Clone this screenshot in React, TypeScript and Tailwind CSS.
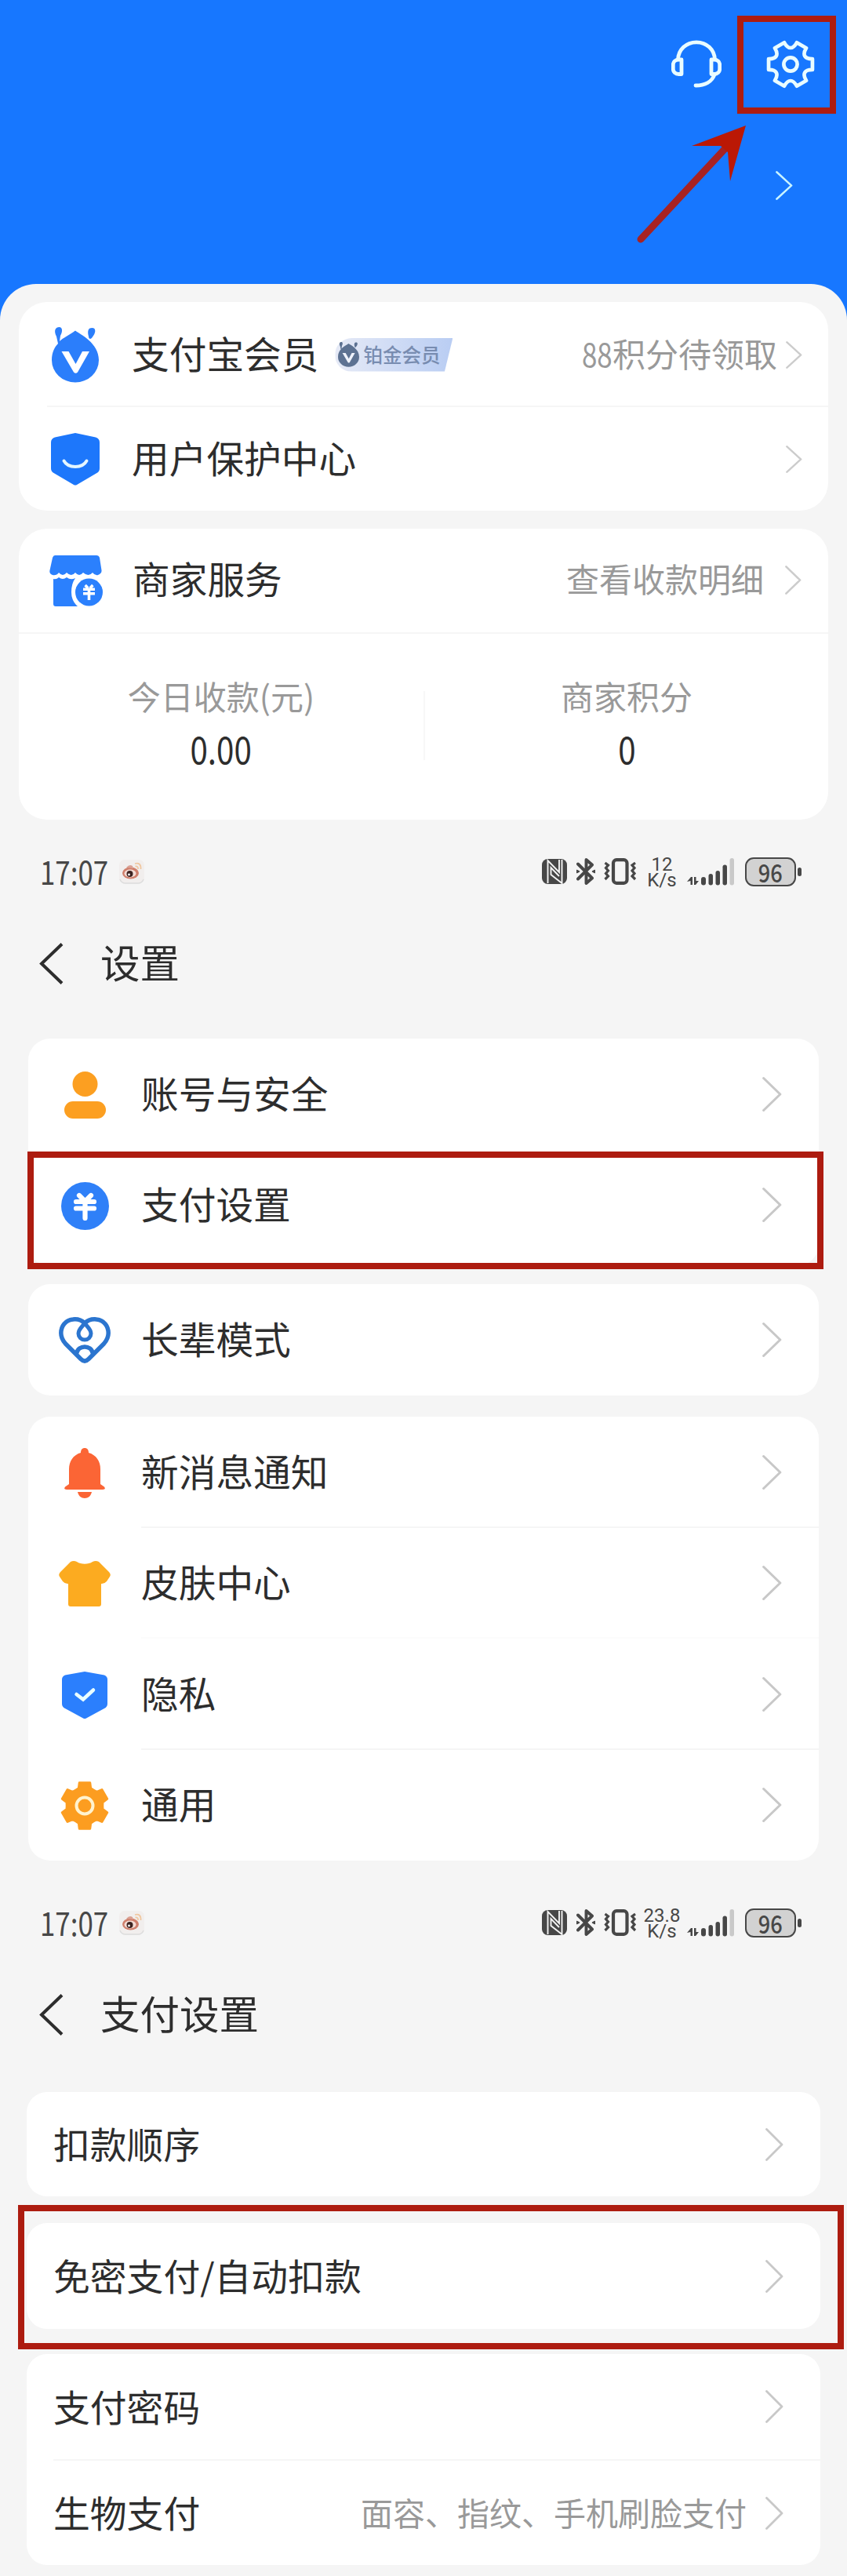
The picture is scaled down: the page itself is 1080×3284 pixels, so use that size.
import React from 'react';

interface ChevronProps {
  className?: string;
}

const Chevron: React.FC<ChevronProps> = ({ className = 'w-[23px] h-[42px] text-[#c8c8c8]' }) => (
  <svg className={className} viewBox="0 0 23 42" fill="none" stroke="currentColor" strokeWidth="2.8" preserveAspectRatio="none">
    <path d="M1.5 1.5 21 21 1.5 40.5" strokeLinecap="round" strokeLinejoin="round" />
  </svg>
);

// Six-tooth gear outline centred on 0,0
const gearPath = (outer: number, inner: number, tip: number, root: number, start: number, round: boolean) => {
  const at = (r: number, deg: number) => {
    const a = (deg * Math.PI) / 180;
    return `${(r * Math.cos(a)).toFixed(2)} ${(r * Math.sin(a)).toFixed(2)}`;
  };
  let d = '';
  for (let i = 0; i < 6; i++) {
    const a = start + i * 60;
    d += `${i === 0 ? 'M' : 'L'}${at(outer, a - tip)}L${at(outer, a + tip)}`;
    d += round
      ? `C${at(inner, a + root)} ${at(inner, a + 60 - root)} ${at(outer, a + 60 - tip)}`
      : `L${at(inner, a + root)}Q${at(inner - 1, a + 30)} ${at(inner, a + 60 - root)}`;
  }
  return d + 'Z';
};

const HeadsetIcon = () => (
  <svg className="w-16 h-[62px]" viewBox="0 0 64 62" fill="none" stroke="#e9fcff" strokeWidth="4.8" strokeLinejoin="round">
    <path d="M8.5 25C9 12 19 2.8 32 2.8S55 12 55.500 25" />
    <path d="M13 25v18.500H9.500C5 43.500 2.300 40.500 2.300 37v-5.500C2.300 28 5 25 9.500 25ZM51 25v18.500h3.500c4.500 0 7.200-3 7.200-6.500v-5.500c0-3.500-2.700-6.500-7.200-6.500Z" />
    <path d="M55 44C52 53 43 58 31 58" strokeLinecap="round" />
  </svg>
);

const GearOutlineIcon = () => (
  <svg className="w-[62px] h-[62px]" viewBox="-31 -31 62 62" fill="none" stroke="#e9fcff" strokeWidth="4.7" strokeLinejoin="round">
    <path d={gearPath(28.8, 19, 14, 21, 0, true)} />
    <circle r="8.600" />
  </svg>
);

const AntMark = ({ color, letter }: { color: string; letter: string }) => (
  <>
    <path d="M6 12C2 4 5 0 9.500 0S14 6 11 11L10 18C14 14 24 9 30 4.500 36 9 60 20 60 42a30 28.500 0 0 1-60 0C0 32 4 25 8 21Z" fill={color} />
    <path d="M47 12C45 4 47 1 51.500 1S56.500 6 53 11c-2 3-3 4-4 4S47 14 47 12Z" fill={color} />
    <path d="M12.500 31h9L30.500 47 39 31h9L33 57.500q-2.500 2.500-5 0Z" fill={letter} />
  </>
);

const MemberIcon = () => (
  <svg className="w-[60px] h-[71px]" viewBox="0 0 60 71">
    <AntMark color="#2b7efb" letter="#ffffff" />
  </svg>
);

const ProtectIcon = () => (
  <svg className="w-[62px] h-[67px]" viewBox="0 0 62 67">
    <path d="M31 0 57 5.500Q62 7 62 12V45Q62 49 58.500 51L33 66Q31 67 29 66L3.500 51Q0 49 0 45V12Q0 7 5 5.500Z" fill="#1d77fb" />
    <path d="M16.500 35.500C22 45.500 40 45.500 45.500 35.500" fill="none" stroke="#e4f6ff" strokeWidth="4" strokeLinecap="round" />
  </svg>
);

const yuanMark = 'M-7.500-14.500-2-9M7.500-14.500 2-9M-11.500-6.500H11.500M-11.500 2H11.500M0-8V14.500';

const StoreIcon = () => (
  <svg className="w-[68px] h-[65px]" viewBox="0 0 68 65">
    <path d="M7 0H60Q63 0 64 3L66.500 19Q67 23 62 25 58 26 55 22 50 28 43 22 38 28 33 22 28 28 22 22 17 28 12 22 9 26 4 25-.500 23 .500 19L4 3Q5 0 7 0Z" fill="#2b80fd" />
    <path d="M5 30Q9 31 12 28 17 32 22 28 27 32 33 29 28 36 28 47 28 58 36 65H8Q5 65 5 62Z" fill="#2b80fd" />
    <circle cx="50.500" cy="47" r="17.500" fill="#2b80fd" />
    <path d={yuanMark} transform="translate(50.500 47.500) scale(.65)" stroke="#ffffff" strokeWidth="5.500" fill="none" />
  </svg>
);

const PersonIcon = () => (
  <svg className="w-[53px] h-[60px]" viewBox="0 0 53 60" fill="#fc9f21">
    <circle cx="26.500" cy="16" r="16" />
    <rect y="38" width="53" height="22" rx="11" />
  </svg>
);

const YuanIcon = () => (
  <svg className="w-[61px] h-[61px]" viewBox="-30.500 -30.500 61 61">
    <circle r="30.500" fill="#2f80f8" />
    <path d={yuanMark} transform="translate(0 1)" stroke="#ffffff" strokeWidth="6.200" fill="none" strokeLinecap="round" />
  </svg>
);

const HeartIcon = () => (
  <svg className="w-[66px] h-[59px]" viewBox="0 0 66 59" fill="none" stroke="#2b75cf" strokeWidth="5.500" strokeLinejoin="round">
    <path d="M33 8C28 3 22 2.500 18 3 8 4 2.800 12 2.800 20.500 2.800 26 5 30 8.500 34L28 53.500Q33 58.500 38 53.500L57.500 34C61 30 63.200 26 63.200 20.500 63.200 12 58 4 48 3 44 2.500 38 3 33 8Z" />
    <path d="M33 8C29 13 25 16 25 21a8 8 0 0 0 16 0C41 16 37 13 33 8Z" strokeWidth="5" />
    <path d="M22.500 46.500C25 35 41 35 43.500 46.500" />
  </svg>
);

const BellIcon = () => (
  <svg className="w-[52px] h-[64px]" viewBox="0 0 52 64" fill="#fb6535">
    <path d="M21 6C21 2 23 0 26 0s5 2 5 6C41 9 46 17 46 27V46L51 49.500Q53.500 53 49 53H3Q-1.500 53 1 49.500L6 46V27C6 17 11 9 21 6Z" />
    <path d="M17 56H35C34 61 30.500 64 26 64S18 61 17 56Z" />
  </svg>
);

const ShirtIcon = () => (
  <svg className="w-[66px] h-[58px]" viewBox="0 0 66 58" fill="#fcab20">
    <path d="M15 1Q19-1 23 1C28 4.500 38 4.500 43 1Q47-1 51 1L64 14Q67 17.500 65 20L61 26Q58 29.500 54 29V55Q54 58 51 58H15Q12 58 12 55V29Q8 29.500 5 26L1 20Q-1 17.500 2 14Z" />
  </svg>
);

const PrivacyIcon = () => (
  <svg className="w-[58px] h-[60px]" viewBox="0 0 58 60">
    <path d="M29 0 54 4.500Q58 6 58 10V41Q58 45 54 47L31 59.500Q29 60.500 27 59.500L4 47Q0 45 0 41V10Q0 6 4 4.500Z" fill="#2b7ffd" />
    <path d="M18.500 29 27 35.500 40 23.500" fill="none" stroke="#eaffff" strokeWidth="4.500" strokeLinecap="round" />
  </svg>
);

const GearIcon = () => (
  <svg className="w-[62px] h-[64px]" viewBox="-31 -32 62 64">
    <path d={gearPath(30, 23.5, 13, 19, 30, false)} fill="#fc9d20" stroke="#fc9d20" strokeWidth="3" strokeLinejoin="round" />
    <circle r="10.500" fill="none" stroke="#fff3cf" strokeWidth="4" />
  </svg>
);

const WeiboIcon = () => (
  <svg className="w-8 h-8" viewBox="0 0 32 32">
    <rect y="1" width="32" height="30" rx="7" fill="#f1eeed" />
    <path d="M1 26Q3 31 8 31H24Q29 31 31 26" stroke="#dcdcdc" strokeWidth="1.500" fill="none" />
    <ellipse cx="14.500" cy="18" rx="10.500" ry="7.500" fill="#cf7f6c" />
    <path d="M9 11Q13 6 17 9L18 12Z" fill="#dba092" />
    <ellipse cx="14" cy="18.500" rx="7.500" ry="5" fill="#f4dcd5" />
    <circle cx="13.500" cy="19" r="4" fill="#3c2220" />
    <circle cx="12.500" cy="20" r="1.400" fill="#ffffff" />
    <path d="M20 6Q28 4 27.500 13M20.500 9.500Q24.500 9 24 13" stroke="#f0c7a0" strokeWidth="1.800" fill="none" />
  </svg>
);

const NfcIcon = () => (
  <svg className="w-8 h-8" viewBox="0 0 32 32">
    <rect width="32" height="32" rx="7.500" fill="#474747" />
    <path d="M7.500 31V2L22 17V1M25.500 1V31L11.500 20V11L22 22" fill="none" stroke="#f5f5f5" strokeWidth="1.900" />
  </svg>
);

const BluetoothIcon = () => (
  <svg className="w-6 h-[34px]" viewBox="0 0 24 34" fill="none" stroke="#474747" strokeWidth="3.900" strokeLinejoin="round" strokeLinecap="round">
    <path d="M2 7.500 20 25.500 12.500 32V2L20 8.500 2 26.500" />
    <path d="M.500 15.500v3L3.500 17ZM23.500 15.500v3L20.500 17Z" fill="#474747" strokeWidth="1.500" />
  </svg>
);

const VibrateIcon = () => (
  <svg className="w-[42px] h-[34px]" viewBox="0 0 42 34" fill="none" stroke="#474747">
    <rect x="12" y="2.200" width="17.500" height="29.600" rx="4" strokeWidth="4.200" />
    <path d="M1.500 6 5.500 9 2.500 12.500 5.500 16 2.500 19.500 5.500 23 1.500 27M40 6 36 9 39 12.500 36 16 39 19.500 36 23 40 27" strokeWidth="3.200" />
  </svg>
);

const SignalIcon = () => (
  <svg className="w-[61px] h-[35px]" viewBox="0 0 61 35" fill="#474747">
    <path d="M0 30 5 24H7V34H4.500V29ZM9 24H11.500V29L15 29 11 34H9Z" />
    <rect x="18" y="24" width="6" height="10.500" rx="3" />
    <rect x="27.500" y="20" width="5.500" height="14.500" rx="2.700" />
    <rect x="36.500" y="16" width="5.500" height="18.500" rx="2.700" />
    <rect x="45.500" y="8.500" width="5.500" height="26" rx="2.700" />
    <rect x="54.500" y="0" width="5.500" height="34.500" rx="2.700" fill="#c9c9c9" />
  </svg>
);

const StatusBar = ({ speed }: { speed: string }) => (
  <div className="flex items-center h-[52px] pl-[51px] pr-[58px] text-[#474747]">
    <div className="w-[88px] mr-[13px]">
      <span className="block w-[106px] origin-left scale-x-[.83] text-[42px] leading-[52px] -mt-[2px]">17:07</span>
    </div>
    <WeiboIcon />
    <div className="flex items-center ml-auto">
      <NfcIcon />
      <div className="ml-3"><BluetoothIcon /></div>
      <div className="ml-[11px]"><VibrateIcon /></div>
      <div className="w-[52px] ml-[6px] pt-px font-['Roboto',sans-serif] text-[24px] leading-[20px] text-center">
        {speed}<br />K/s
      </div>
      <div className="ml-[6px]"><SignalIcon /></div>
      <div className="flex items-center justify-center w-[65px] h-[37px] ml-[13px] rounded-[11px] border-[2.500px] border-[#474747] bg-[#d2d2d2]">
        <span className="scale-x-[.85] text-[32px] leading-[30px] font-medium -mt-px">96</span>
      </div>
      <div className="w-[5px] h-[11px] ml-[2px] rounded-full bg-[#474747]" />
    </div>
  </div>
);

const TitleBar = ({ title }: { title: string }) => (
  <div className="flex items-center h-[60px] pl-[50px] text-[#2d2d2d]">
    <svg className="w-[31px] h-[53px]" viewBox="0 0 31 53" fill="none" stroke="currentColor" strokeWidth="4">
      <path d="M29 1.500 3 26.500 29 51.500" />
    </svg>
    <h2 className="ml-[47px] -mt-[6px] text-[50.500px] leading-[60px]">{title}</h2>
  </div>
);

interface SettingRowProps {
  icon: React.ReactNode;
  label: string;
  divider?: string;
}

const SettingRow: React.FC<SettingRowProps> = ({ icon, label, divider = 'border-transparent' }) => (
  <div className="flex items-center h-[141.500px]">
    <div className="flex items-center justify-center w-[144px] pt-[2px]">{icon}</div>
    <div className={`flex items-center justify-between flex-1 h-full pr-[47px] border-b-2 ${divider}`}>
      <span className="text-[47.700px] leading-[60px] -mt-[2px]">{label}</span>
      <Chevron className="w-[25px] h-[44px] text-[#c8c8c8] mt-[2px]" />
    </div>
  </div>
);

const PayRow = ({ label, note, height }: { label: string; note?: string; height: string }) => (
  <div className={`flex items-center pl-[34px] pr-[47px] ${height}`}>
    <span className="text-[46.800px] leading-[60px] -mt-[3px]">{label}</span>
    {note && <span className="ml-auto text-[41px] leading-[60px] text-[#999999] mr-[24px] -mt-[3px]">{note}</span>}
    <div className={note ? '' : 'ml-auto'}>
      <Chevron />
    </div>
  </div>
);

const Highlight = ({ className }: { className: string }) => (
  <div className={`absolute border-[8.500px] border-[#ad1c10] ${className}`} />
);

const Hero = () => (
  <header className="relative h-[362px]">
    <div className="flex justify-end items-center gap-[57px] pt-[51px] pr-[41px]">
      <HeadsetIcon />
      <GearOutlineIcon />
    </div>
    <div className="flex justify-end pt-[105px] pr-[69px]">
      <Chevron className="w-[22px] h-[37px] text-[#c9f4ff]" />
    </div>
    <Highlight className="left-[940px] top-[20px] w-[126px] h-[125px] border-[#a82222]" />
    <svg className="absolute left-[810px] top-[156px] w-[146px] h-[158px]" viewBox="0 0 146 158">
      <path d="M7 149 115 33" stroke="#a82222" strokeWidth="9" strokeLinecap="round" />
      <path d="M141 4 72 30 109 30 118 38 121 75Z" fill="#bb1805" />
    </svg>
  </header>
);

const MemberCard = () => (
  <section className="h-[266px] mx-6 rounded-[36px] bg-white">
    <div className="flex items-center h-[134px] pl-[42px] pr-[33px]">
      <MemberIcon />
      <span className="ml-[42px] -mt-[4px] text-[47.700px] leading-[60px]">支付宝会员</span>
      <div className="flex items-center w-[150px] h-[43px] ml-[21px] pl-1 bg-linear-to-r from-[#e6eaf6] to-[#b9cdf3] rounded-l-full [clip-path:polygon(0_0,100%_0,93%_100%,0_100%)]">
        <svg className="w-[27px] h-[32px]" viewBox="0 0 60 71">
          <AntMark color="#5d7292" letter="#eef2fb" />
        </svg>
        <span className="ml-[5px] text-[24.500px] leading-[30px] font-medium text-[#788cb0]">铂金会员</span>
      </div>
      <span className="flex-1 mr-[11px] -mt-[4px] text-right text-[#999999] text-[42px] leading-[60px]">
        <span className="inline-block origin-right scale-x-[.83]">88</span>积分待领取
      </span>
      <Chevron className="w-[21px] h-[35px] text-[#cccccc]" />
    </div>
    <div className="ml-9 h-[2px] -mt-[2px] bg-[#f6f6f6]" />
    <div className="flex items-center h-[132px] pl-[41px] pr-[33px]">
      <ProtectIcon />
      <span className="ml-[41px] -mt-[4px] text-[47.700px] leading-[60px]">用户保护中心</span>
      <Chevron className="ml-auto w-[21px] h-[35px] text-[#cccccc]" />
    </div>
  </section>
);

const MerchantCard = () => (
  <section className="h-[371px] mt-[23px] mx-6 rounded-[36px] bg-white">
    <div className="flex items-center h-[134px] pl-[39px] pr-[34px] border-b-2 border-[#f6f6f6]">
      <StoreIcon />
      <span className="ml-[38px] text-[47.700px] leading-[60px] -mt-[7px]">商家服务</span>
      <span className="ml-auto mr-[27px] text-[42px] leading-[60px] text-[#999999] -mt-[7px]">查看收款明细</span>
      <Chevron className="w-[21px] h-[37px] text-[#cccccc] -mt-px" />
    </div>
    <div className="flex h-[237px]">
      <div className="flex flex-col items-center w-[516px] pt-[47px]">
        <span className="text-[42px] leading-[64px] text-[#999999]">今日收款(元)</span>
        <span className="text-[48px] leading-[68px] scale-x-[.84]">0.00</span>
      </div>
      <div className="w-[2px] h-[88px] mt-[73px] bg-[#f7f7f7]" />
      <div className="flex flex-col items-center flex-1 pt-[47px]">
        <span className="text-[42px] leading-[64px] text-[#999999]">商家积分</span>
        <span className="text-[48px] leading-[68px] scale-x-[.84]">0</span>
      </div>
    </div>
  </section>
);

const SettingsPage = () => (
  <section>
    <div className="pt-[40px]">
      <StatusBar speed="12" />
    </div>
    <div className="pt-[61px]">
      <TitleBar title="设置" />
    </div>
    <div className="mx-9 mt-[66px]">
      <div className="relative h-[290px] rounded-[28px] bg-white">
        <SettingRow icon={<PersonIcon />} label="账号与安全" />
        <SettingRow icon={<YuanIcon />} label="支付设置" />
        <Highlight className="-left-px top-[144px] w-[1015px] h-[150px]" />
      </div>
      <div className="mt-[23px] rounded-[28px] bg-white">
        <SettingRow icon={<HeartIcon />} label="长辈模式" />
      </div>
      <div className="mt-[27.500px] rounded-[28px] bg-white">
        <SettingRow icon={<BellIcon />} label="新消息通知" divider="border-[#f5f5f5]" />
        <SettingRow icon={<ShirtIcon />} label="皮肤中心" divider="border-[#fcfcfc]" />
        <SettingRow icon={<PrivacyIcon />} label="隐私" divider="border-[#f5f5f5]" />
        <SettingRow icon={<GearIcon />} label="通用" />
      </div>
    </div>
  </section>
);

const PaymentPage = () => (
  <section>
    <div className="pt-[53px]">
      <StatusBar speed="23.8" />
    </div>
    <div className="pt-[61px]">
      <TitleBar title="支付设置" />
    </div>
    <div className="mx-[34px] mt-[69px]">
      <div className="rounded-[26px] bg-white">
        <PayRow label="扣款顺序" height="h-[133px]" />
      </div>
      <div className="relative mt-[34px] rounded-[26px] bg-white">
        <PayRow label="免密支付/自动扣款" height="h-[135px]" />
        <Highlight className="-left-[11px] -top-[23px] w-[1053px] h-[184px]" />
      </div>
      <div className="mt-[32px] rounded-[26px] bg-white">
        <PayRow label="支付密码" height="h-[134px]" />
        <div className="ml-[34px] h-[2px] bg-[#f6f6f6]" />
        <PayRow label="生物支付" note="面容、指纹、手机刷脸支付" height="h-[133px]" />
      </div>
    </div>
  </section>
);

const App: React.FC = () => (
  <main className="w-[1080px] h-[3284px] overflow-hidden bg-[#1777ff] text-[#2d2d2d] font-['Noto_Sans_CJK_SC',sans-serif]">
    <Hero />
    <div className="h-[2922px] pt-[23px] rounded-t-[46px] bg-[#f5f5f5]">
      <MemberCard />
      <MerchantCard />
      <SettingsPage />
      <PaymentPage />
    </div>
  </main>
);

export default App;
